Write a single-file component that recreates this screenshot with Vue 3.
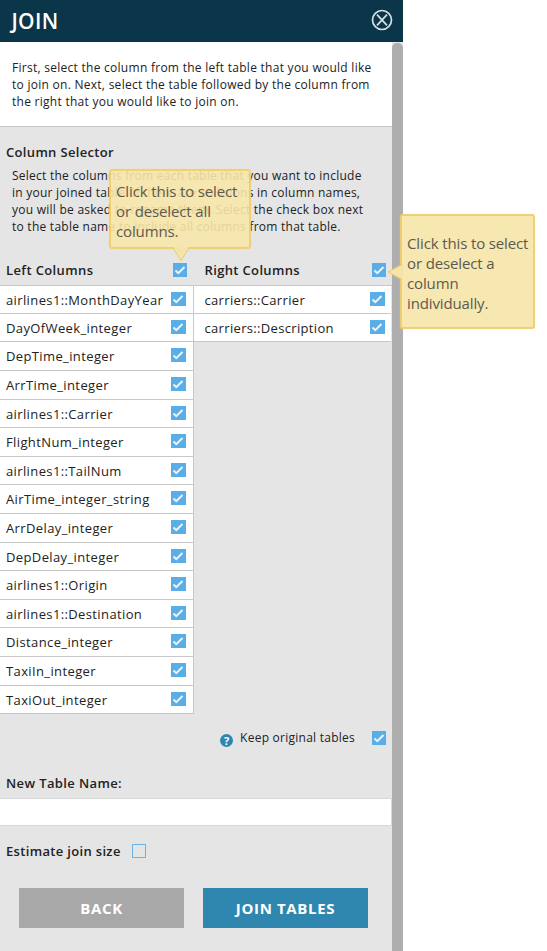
<script setup>
const left = [
  ['airlines1::MonthDayYear', 28], ['DayOfWeek_integer', 28], ['DepTime_integer', 29],
  ['ArrTime_integer', 29], ['airlines1::Carrier', 28], ['FlightNum_integer', 29],
  ['airlines1::TailNum', 28], ['AirTime_integer_string', 29], ['ArrDelay_integer', 29],
  ['DepDelay_integer', 28], ['airlines1::Origin', 29], ['airlines1::Destination', 28],
  ['Distance_integer', 29], ['TaxiIn_integer', 29], ['TaxiOut_integer', 28],
]
const right = [['carriers::Carrier', 28], ['carriers::Description', 28]]
</script>

<template>
  <div class="page">
    <header class="bar">
      <h1>JOIN</h1>
      <svg class="close" width="22" height="22" viewBox="0 0 22 22">
        <circle cx="11" cy="11" r="9.5" />
        <path d="M6 5.6L16 16.4M16 5.6L6 16.4" />
      </svg>
    </header>
    <div class="body">
      <main class="content">
        <p class="intro">First, select the column from the left table that you would like<br>to join on. Next, select the table followed by the column from<br>the right that you would like to join on.</p>
        <h2 class="title">Column Selector</h2>
        <p class="desc">Select the columns from each table that you want to include<br>in your joined table. If there are collisions in column names,<br>you will be asked to rename them. Select the check box next<br>to the table name to include all columns from that table.</p>
        <div class="heads">
          <div class="head head-left"><span>Left Columns</span><i class="check"><svg viewBox="0 0 14 14"><path d="M2.5 7.5L5.3 10.2L11.5 4" /></svg></i></div>
          <div class="head head-right"><span>Right Columns</span><i class="check"><svg viewBox="0 0 14 14"><path d="M2.5 7.5L5.3 10.2L11.5 4" /></svg></i></div>
        </div>
        <div class="lists">
          <ul class="list list-left">
            <li v-for="r in left" :key="r[0]" :style="{ height: r[1] + 'px' }"><span>{{ r[0] }}</span><i class="check"><svg viewBox="0 0 14 14"><path d="M2.5 7.5L5.3 10.2L11.5 4" /></svg></i></li>
          </ul>
          <ul class="list list-right">
            <li v-for="r in right" :key="r[0]" :style="{ height: r[1] + 'px' }"><span>{{ r[0] }}</span><i class="check"><svg viewBox="0 0 14 14"><path d="M2.5 7.5L5.3 10.2L11.5 4" /></svg></i></li>
          </ul>
        </div>
        <div class="keep">
          <b class="help">?</b><span>Keep original tables</span>
          <i class="check"><svg viewBox="0 0 14 14"><path d="M2.5 7.5L5.3 10.2L11.5 4" /></svg></i>
        </div>
        <label class="name">New Table Name:</label>
        <div class="input"></div>
        <div class="estimate"><span>Estimate join size</span><i class="empty"></i></div>
        <div class="actions"><button class="back">BACK</button><button class="join">JOIN TABLES</button></div>
      </main>
      <div class="track"><div class="thumb"></div></div>
    </div>
    <aside class="tip tip-all">
      Click this to select<br>or deselect all<br>columns.
      <svg class="arrow" width="18" height="15" viewBox="0 0 18 15"><path class="fill" d="M1.5 0L9 13L16.5 0Z" /><path class="edge" d="M1 1L9 13.5L17 1" /></svg>
    </aside>
    <aside class="tip tip-one">
      Click this to select<br>or deselect a<br>column<br>individually.
      <svg class="arrow" width="17" height="18" viewBox="0 0 17 18"><path class="fill" d="M17 1L2 9L17 17Z" /><path class="edge" d="M16 1.5L2 9L16 16.5" /></svg>
    </aside>
  </div>
</template>

<style>
body { margin: 0; background: #fff; overflow: hidden; }
</style>

<style scoped>
* { box-sizing: border-box; }
h1, h2, p, ul { margin: 0; padding: 0; }
.page { position: relative; width: 547px; height: 951px; overflow: hidden; font-family: "Open Sans", sans-serif; font-size: 12px; color: #222; letter-spacing: .38px; white-space: nowrap; }
.bar { width: 403px; height: 42px; background: #0b3548; display: flex; align-items: center; justify-content: space-between; padding: 0 10px 2px 11.5px; }
h1 { font-size: 21px; font-weight: 600; color: #fff; letter-spacing: .3px; line-height: 30px; padding-top: 2px; }
.close { fill: none; stroke: #d9e0e3; stroke-width: 1.7; }
.body { display: flex; width: 403px; height: 909px; }
.content { width: 392px; background: #e5e5e5; }
.intro { height: 85px; background: #fff; border-bottom: 1px solid #c6c6c6; padding: 17px 0 0 12px; line-height: 17px; letter-spacing: .27px; }
.title { font-size: 13px; font-weight: 600; line-height: 18px; padding: 16px 0 0 6px; letter-spacing: .33px; }
.desc { line-height: 17px; padding: 6px 0 0 12px; height: 93px; letter-spacing: .25px; }
.heads { display: flex; height: 32px; border-bottom: 1px solid #c8c8c8; font-size: 13px; font-weight: 600; }
.head { display: flex; justify-content: space-between; padding: 7px 6px 0 6px; line-height: 18px; }
.head-left { width: 193px; }
.head-right { width: 199px; padding-left: 11.5px; padding-right: 6.5px; letter-spacing: .35px; }
.check { display: block; flex: none; width: 14px; height: 14px; background: #5aaee8; margin-top: 2px; }
.check svg { display: block; width: 14px; height: 14px; fill: none; stroke: #eef3f6; stroke-width: 2; }
.lists { display: flex; align-items: flex-start; height: 428px; }
.list { list-style: none; font-size: 13px; font-weight: 500; }
.list-left { width: 194px; border-right: 1px solid #c8c8c8; }
.list-right { width: 197px; }
li { display: flex; justify-content: space-between; background: #fff; border-bottom: 1px solid #c8c8c8; padding: 5px 7.5px 0 6px; line-height: 18px; }
.list-left .check, .list-right .check { width: 14.5px; }
.list-right li { padding-left: 10.5px; padding-right: 6.5px; letter-spacing: .33px; }
li .check { margin-top: 1px; }
.keep { display: flex; height: 50px; justify-content: flex-end; padding: 15px 6.5px 0 0; line-height: 18px; letter-spacing: .25px; }
.help { width: 13px; height: 13px; border-radius: 50%; background: #2f86ae; color: #fff; font-size: 11px; line-height: 13px; text-align: center; letter-spacing: 0; margin: 5px 7px 0 0; }
.keep .check { margin-left: 16.5px; }
.name { display: block; font-size: 13px; font-weight: 600; line-height: 18px; height: 34px; padding: 10px 0 0 6px; }
.input { height: 28px; width: 392px; background: #fff; border: 1px solid #d8d8d8; border-left: 0; }
.estimate { display: flex; height: 62px; padding: 16px 0 0 6px; font-size: 13px; font-weight: 600; line-height: 18px; letter-spacing: .33px; }
.empty { width: 14px; height: 14px; border: 1px solid #68b3e8; margin: 2px 0 0 11.5px; }
.actions { display: flex; gap: 19px; padding-left: 19px; }
button { width: 165px; height: 40px; border: 0; padding: 0; color: #fff; font: 700 15px/40px "Open Sans", sans-serif; letter-spacing: .65px; }
.back { background: #a8a8a8; }
.join { background: #2f86ae; }
.track { width: 11px; background: #e5e5e5; }
.thumb { height: 930px; margin-top: 1px; border-radius: 5px; background: #aeaeae; }
.tip { position: absolute; border: 1px solid #f2cf6c; border-radius: 2px; background: rgba(247, 230, 168, .9); box-shadow: 0 0 1px 0.5px #f2cf6c; color: #5c5a50; font-size: 15px; line-height: 20px; letter-spacing: -.13px; }
.tip-all { left: 110px; top: 170px; width: 140px; height: 78px; padding: 10px 0 0 5px; }
.tip-one { left: 401px; top: 215px; width: 133px; height: 113px; padding: 17px 0 0 5px; background: #f7e7b0; }
.arrow { position: absolute; overflow: visible; }
.fill { fill: #f5e4a9; }
.edge { fill: none; stroke: #f0ca60; }
.tip-all .arrow { left: 60.5px; top: 76px; }
.tip-one .arrow { left: -16.5px; top: 47px; }
</style>
